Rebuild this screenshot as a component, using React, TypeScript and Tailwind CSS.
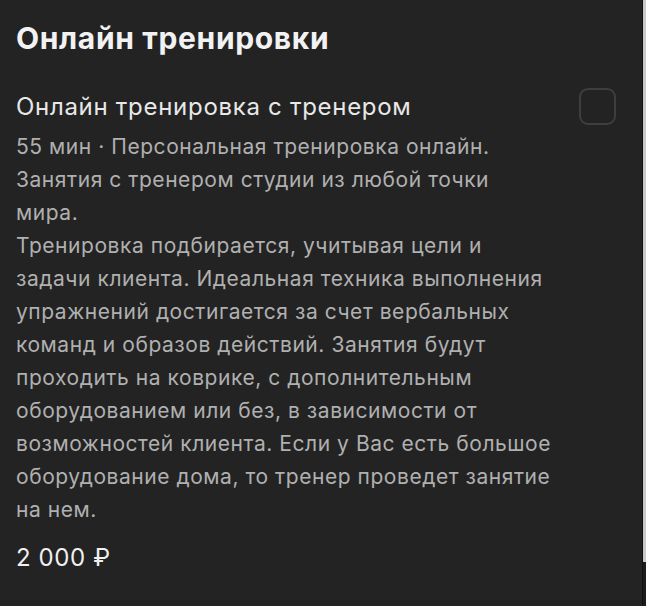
import React from 'react';

const lines = [
  '55 мин · Персональная тренировка онлайн.',
  'Занятия с тренером студии из любой точки',
  'мира.',
  'Тренировка подбирается, учитывая цели и',
  'задачи клиента. Идеальная техника выполнения',
  'упражнений достигается за счет вербальных',
  'команд и образов действий. Занятия будут',
  'проходить на коврике, с дополнительным',
  'оборудованием или без, в зависимости от',
  'возможностей клиента. Если у Вас есть большое',
  'оборудование дома, то тренер проведет занятие',
  'на нем.',
];

const App: React.FC = () => {
  return (
    <div className="flex h-[606px] w-[646px] overflow-hidden bg-[#232323] font-['Inter',sans-serif]">
      <div className="flex flex-1 flex-col px-4 pt-[18px]">
        <h1 className="text-[30px] font-bold leading-[40px] tracking-[0.65px] text-[#f2f2f2]">Онлайн тренировки</h1>

        {/* Service item */}
        <div className="mt-[35px] flex items-start justify-between">
          <div className="flex flex-col">
            <h2 className="text-[24px] leading-[28px] tracking-[0.7px] text-[#e8e8e8]">Онлайн тренировка с тренером</h2>
            <p className="mt-[9px] text-[21px] leading-[33px] tracking-[0.55px] text-[#b0b0b0]">
              {lines.map((l, i) => (
                <span key={i} className="block whitespace-nowrap">{l}</span>
              ))}
            </p>
            <div className="mt-[18px] text-[24px] leading-[28px] tracking-[0.6px] text-[#f0f0f0]">2 000 ₽</div>
          </div>
          <div className="mr-[10px] -mt-[5px] h-[37px] w-[37px] shrink-0 rounded-[9px] border-2 border-[#3e3e3e]" />
        </div>
      </div>

      {/* scrollbar edge */}
      <div className="flex w-[4px] flex-col border-l border-[#111]">
        <div className="h-[562px] bg-[#c9c9c9]" />
        <div className="flex-1 bg-[#1c1c1c]" />
      </div>
    </div>
  );
};

export default App;
